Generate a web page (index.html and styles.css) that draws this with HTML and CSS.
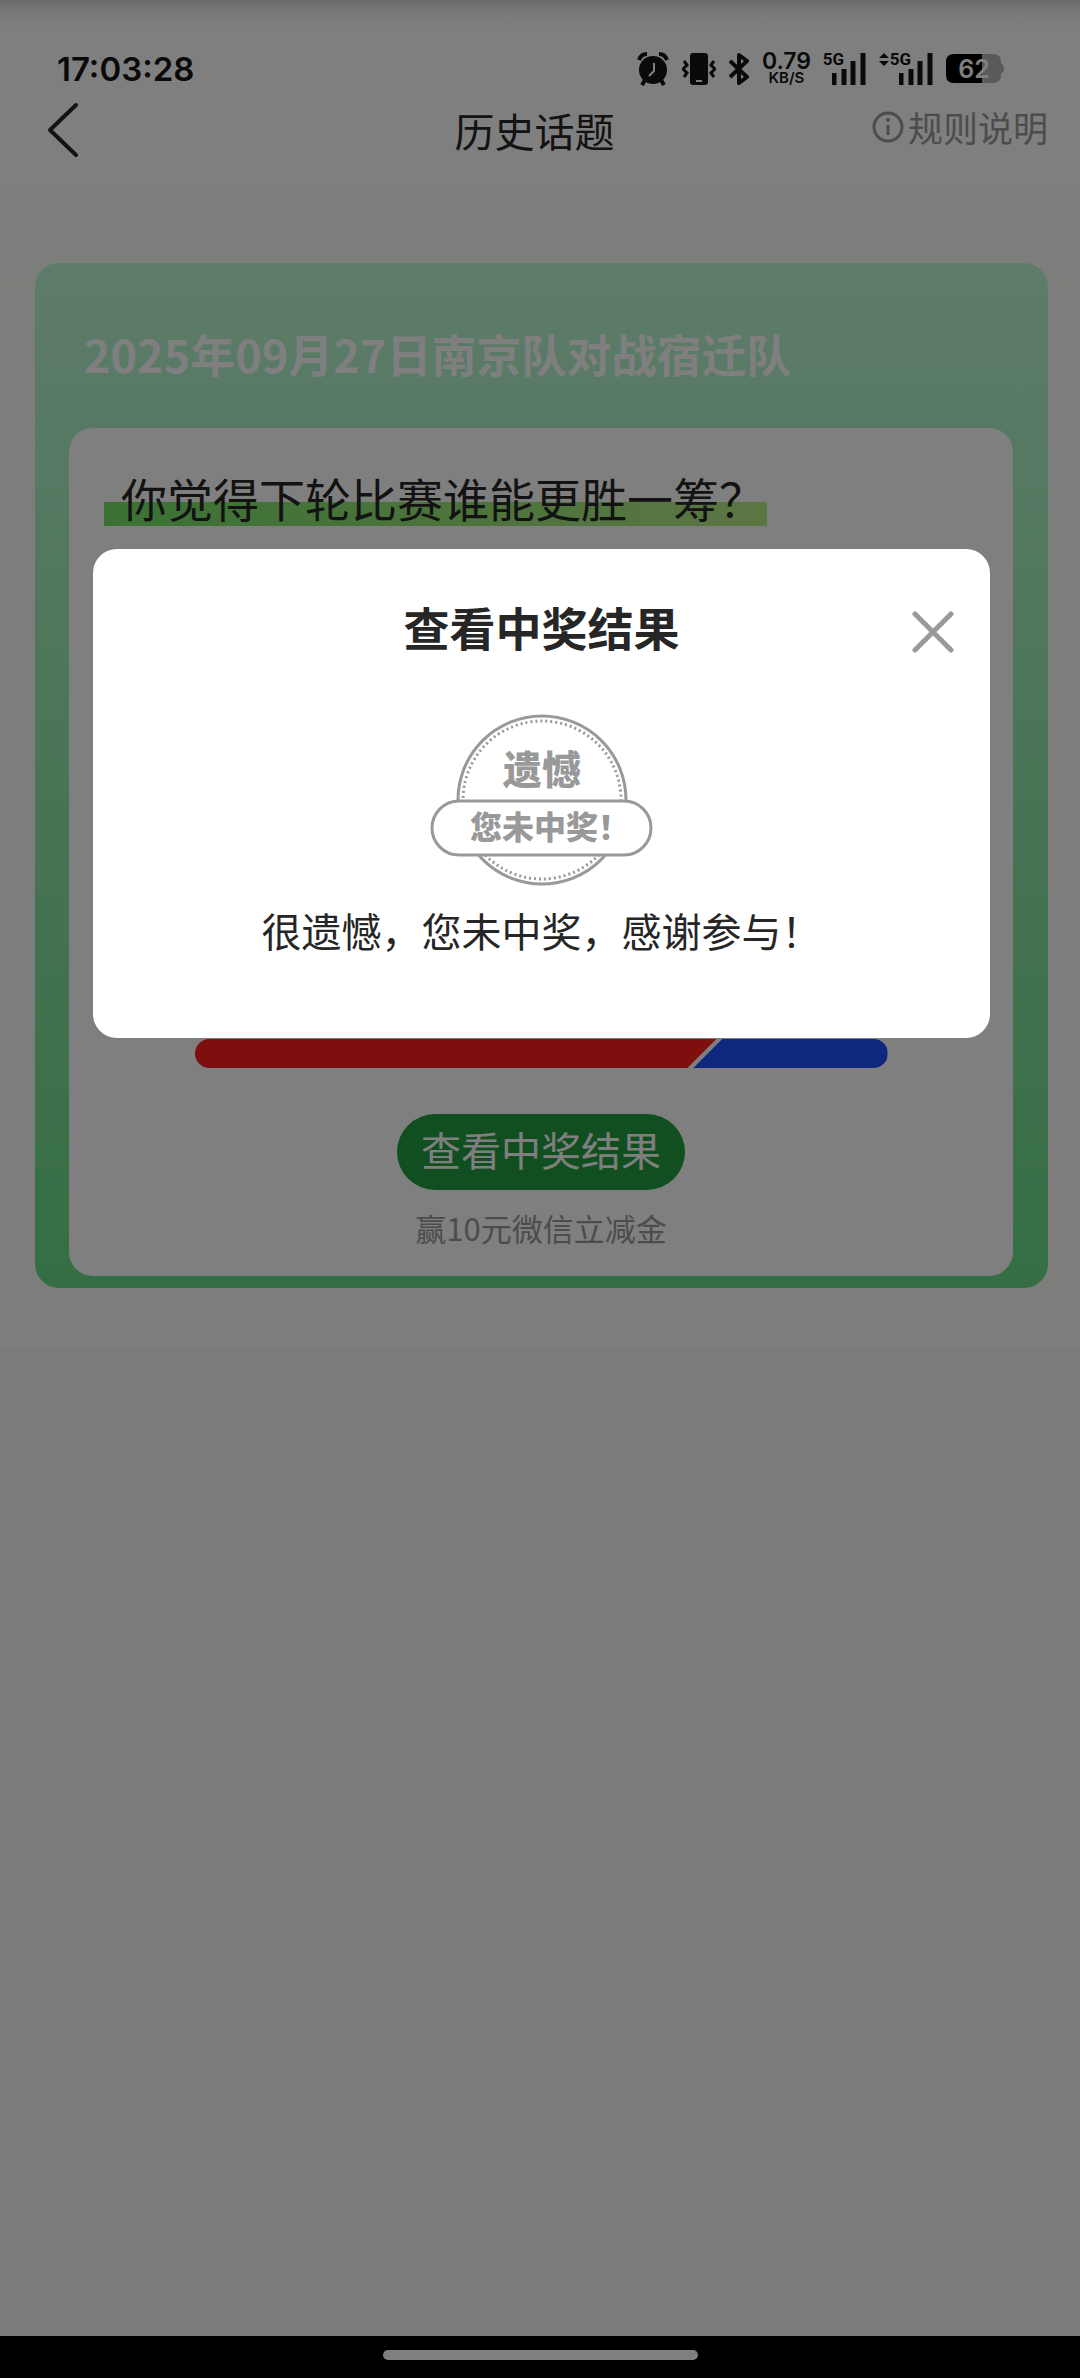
FILE: index.html
```html
<!DOCTYPE html>
<html lang="zh-CN">
<head>
  <meta charset="UTF-8" />
  <meta name="viewport" content="width=device-width, initial-scale=1" />
  <title>历史话题</title>
  <link rel="stylesheet" href="styles.css">
</head>
<body>
  <div class="hero">
    <div class="status-bar">
      <div class="clock">17:03:28</div>
      <div class="status-icons">
        <svg width="32" height="34" viewBox="0 0 32 34">
          <circle cx="16" cy="18" r="14" fill="#141414"/>
          <path d="M2 8 Q4 2 10 2 M30 8 Q28 2 22 2" fill="none" stroke="#141414" stroke-width="4"/>
          <path d="M8 28 L5 33 M24 28 L27 33" stroke="#141414" stroke-width="4"/>
          <path d="M17 11 V19 L12 24" fill="none" stroke="#fff" stroke-width="2"/>
        </svg>
        <svg width="34" height="34" viewBox="0 0 34 34">
          <rect x="8" y="1" width="18" height="32" rx="3" fill="#141414"/>
          <path d="M14 29 H20" stroke="#fff" stroke-width="2"/>
          <path d="M2 9 L5 13 L1 17 L5 21 L2 25 M32 9 L29 13 L33 17 L29 21 L32 25" fill="none" stroke="#141414" stroke-width="3"/>
        </svg>
        <svg width="20" height="34" viewBox="0 0 20 34">
          <path d="M1 9 L18 25 L10 31 V3 L18 9 L1 25" fill="none" stroke="#141414" stroke-width="4" stroke-linejoin="round"/>
        </svg>
        <div class="net-speed">
          <span class="speed-value">0.79</span>
          <span class="speed-unit">KB/S</span>
        </div>
        <div class="signal">
          <span class="signal-type">5G</span>
          <svg width="34" height="34" viewBox="0 0 34 34">
            <path d="M2 21 V33 M12 17 V33 M21 9 V33 M31 1 V33" stroke="#141414" stroke-width="5"/>
          </svg>
        </div>
        <div class="signal signal-data">
          <svg class="data-arrows" width="10" height="34" viewBox="0 0 10 34">
            <path d="M0 6 L5 1 L10 6 Z M0 9 L5 14 L10 9 Z" fill="#141414"/>
          </svg>
          <span class="signal-type">5G</span>
          <svg width="34" height="34" viewBox="0 0 34 34">
            <path d="M2 21 V33 M12 17 V33 M21 9 V33 M31 1 V33" stroke="#141414" stroke-width="5"/>
          </svg>
        </div>
        <svg width="58" height="34" viewBox="0 0 58 34">
          <path d="M9 2 H47 Q55 2 55 10 V23 Q55 31 47 31 H36 V2 Z M54 11 Q58 12 58 17 Q58 21 54 22 Z" fill="#b4b4b4"/>
          <path d="M8 2 H36 V31 H8 Q0 31 0 23 V10 Q0 2 8 2 Z" fill="#000"/>
          <text class="battery-text" x="28" y="26" text-anchor="middle">62</text>
        </svg>
      </div>
    </div>

    <header class="nav">
      <button class="back-btn" type="button" aria-label="返回">
        <svg width="32" height="56" viewBox="0 0 32 56">
          <path d="M29 3 L3 28 L29 53" fill="none" stroke="#262626" stroke-width="4" stroke-linecap="round" stroke-linejoin="round"/>
        </svg>
      </button>
      <h1 class="nav-title">历史话题</h1>
      <a class="rules-link" href="#rules">
        <svg width="32" height="32" viewBox="0 0 32 32">
          <circle cx="16" cy="16" r="14" fill="none" stroke="#999" stroke-width="3"/>
          <circle cx="16" cy="9" r="2" fill="#999"/>
          <path d="M16 14 V24" stroke="#999" stroke-width="3"/>
        </svg>
        规则说明
      </a>
    </header>

    <main class="topic-card">
      <h2 class="topic-title">2025年09月27日南京队对战宿迁队</h2>
      <section class="topic-body">
        <p class="question">你觉得下轮比赛谁能更胜一筹？</p>
        <div class="vote-bar">
          <div class="vote-red" style="width: 75.3%"></div>
          <div class="vote-blue"></div>
        </div>
        <button class="result-btn" type="button">查看中奖结果</button>
        <p class="prize">赢10元微信立减金</p>
      </section>
    </main>
  </div>

  <div class="system-bar">
    <div class="home-indicator"></div>
  </div>

  <div class="overlay">
    <div class="modal" role="dialog" aria-labelledby="modal-title">
      <button class="close-btn" type="button" aria-label="关闭">
        <svg width="42" height="42" viewBox="0 0 42 42">
          <path d="M3 3 L39 39 M39 3 L3 39" stroke="#999" stroke-width="5" stroke-linecap="round"/>
        </svg>
      </button>
      <h2 class="modal-title" id="modal-title">查看中奖结果</h2>
      <svg class="stamp" width="224" height="174" viewBox="0 0 224 174">
        <circle cx="112" cy="87" r="84" fill="#fff" stroke="#999" stroke-width="3"/>
        <circle cx="112" cy="87" r="79" fill="none" stroke="#999" stroke-width="3" stroke-dasharray="2 3"/>
        <rect x="2" y="88" width="219" height="54" rx="27" fill="#fff" stroke="#999" stroke-width="3"/>
        <text class="stamp-top" x="112" y="71" text-anchor="middle">遗憾</text>
        <text class="stamp-bottom" x="40" y="126">您未中奖！</text>
      </svg>
      <p class="modal-text">很遗憾，您未中奖，感谢参与！</p>
    </div>
  </div>
</body>
</html>
```
FILE: styles.css
```css
* {
  box-sizing: border-box;
  margin: 0;
  padding: 0;
}

body {
  font-family: "Noto Sans CJK SC", sans-serif;
  background: #f7f7f7;
  color: #262626;
  display: flex;
  flex-direction: column;
  min-height: 100vh;
}

button {
  font-family: inherit;
  border: none;
  background: none;
  cursor: pointer;
}

svg {
  display: block;
}

.hero {
  background: linear-gradient(to bottom, #fff 0, #fff 130px, #fafdf6 300px, #fafdf6 100%);
  padding-bottom: 60px;
}

/* Status bar */
.status-bar {
  display: flex;
  justify-content: space-between;
  align-items: center;
  height: 98px;
  padding: 40px 76px 0 57px;
  background: linear-gradient(to bottom, #d4d4d4 0, #f4f4f4 14px, #fff 30px);
  font-family: Inter, sans-serif;
  color: #141414;
}

.clock {
  font-size: 33px;
  font-weight: 600;
}

.status-icons {
  display: flex;
  align-items: center;
  gap: 13px;
}

.net-speed {
  display: flex;
  flex-direction: column;
  align-items: center;
  font-weight: 600;
}

.speed-value {
  font-size: 23px;
  line-height: 18px;
}

.speed-unit {
  font-size: 15px;
  line-height: 16px;
}

.signal {
  position: relative;
  display: flex;
  justify-content: flex-end;
  width: 42px;
}

.signal-data {
  width: 54px;
}

.signal-type {
  position: absolute;
  top: 0;
  right: 22px;
  font-family: Roboto, sans-serif;
  font-size: 17px;
  font-weight: 700;
  line-height: 14px;
}

.data-arrows {
  margin-right: auto;
}

.battery-text {
  font-size: 25px;
  font-weight: 600;
  fill: #fff;
}

/* Navigation */
.nav {
  display: grid;
  grid-template-columns: 1fr auto 1fr;
  align-items: center;
  height: 64px;
  padding: 0 32px 0 47px;
}

.back-btn {
  justify-self: start;
}

.nav-title {
  margin-right: 26px;
  font-size: 40px;
  font-weight: 400;
  line-height: 60px;
}

.rules-link {
  justify-self: end;
  display: flex;
  align-items: center;
  gap: 4px;
  padding-bottom: 6px;
  color: #999;
  font-size: 35px;
  line-height: 56px;
  text-decoration: none;
}

/* Topic card */
.topic-card {
  margin: 101px 32px 0 35px;
  padding: 57px 35px 12px 34px;
  border-radius: 24px;
  background: linear-gradient(to bottom, #bcf8d4 0%, #6adc88 100%);
}

.topic-title {
  padding-left: 15px;
  color: #fff;
  font-size: 45px;
  font-weight: 700;
  line-height: 68px;
}

.topic-body {
  display: flex;
  flex-direction: column;
  align-items: center;
  margin-top: 40px;
  padding: 35px 35px 24px;
  border-radius: 24px;
  background: #fff;
}

.question {
  align-self: flex-start;
  padding: 0 2px 3px 17px;
  background: linear-gradient(to right, #76e468, #b8ec86) left bottom 8px / 100% 24px no-repeat;
  font-size: 46px;
  line-height: 68px;
}

.vote-bar {
  display: flex;
  width: 693px;
  max-width: 100%;
  height: 29px;
  margin-top: 505px;
  border-radius: 15px;
  overflow: hidden;
}

.vote-red {
  background: #ff1c1c;
  clip-path: polygon(0 0, 100% 0, calc(100% - 29px) 100%, 0 100%);
}

.vote-blue {
  flex: 1;
  margin-left: -23px;
  background: #1c4eff;
  clip-path: polygon(29px 0, 100% 0, 100% 100%, 0 100%);
}

.result-btn {
  height: 76px;
  margin-top: 46px;
  padding: 0 24px 6px;
  border-radius: 38px;
  background: #229e40;
  color: #fff;
  font-size: 40px;
  line-height: 60px;
}

.prize {
  margin-top: 14px;
  color: #999;
  font-size: 31px;
  line-height: 48px;
}

/* System bar */
.system-bar {
  display: flex;
  justify-content: center;
  height: 42px;
  margin-top: auto;
  padding-top: 14px;
  background: #000;
}

.home-indicator {
  width: 315px;
  height: 10px;
  border-radius: 5px;
  background: #fff;
}

/* Result modal */
.overlay {
  position: fixed;
  inset: 0;
  padding: 549px 90px 0 93px;
  background: rgba(0, 0, 0, 0.5);
}

.modal {
  position: relative;
  display: flex;
  flex-direction: column;
  align-items: center;
  padding: 43px 40px 78px;
  border-radius: 24px;
  background: #fff;
}

.close-btn {
  position: absolute;
  top: 62px;
  right: 36px;
}

.modal-title {
  font-size: 46px;
  font-weight: 700;
  line-height: 68px;
}

.stamp {
  margin: 53px 0 13px;
}

.stamp text {
  fill: #999;
  font-weight: 900;
}

.stamp-top {
  font-size: 39px;
}

.stamp-bottom {
  font-size: 32px;
}

.modal-text {
  font-size: 40px;
  line-height: 60px;
}
```
